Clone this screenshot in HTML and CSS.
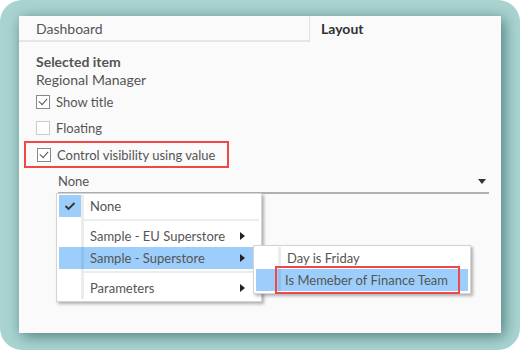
FILE: index.html
```html
<!DOCTYPE html>
<html>
<head>
    <title>Layout</title>
    <meta name="viewport" content="width=device-width, initial-scale=1.0">
    <link rel="stylesheet" href="styles.css">
</head>
<body>
    <div id="frame">
        <div id="panel">
            <div class="tabs">
                <div class="tab">Dashboard</div>
                <div class="tab active">Layout</div>
            </div>
            <div class="content">
                <div class="heading">Selected item</div>
                <div class="sub">Regional Manager</div>

                <div class="check-row">
                    <span class="box checked"></span>Show title
                </div>
                <div class="check-row">
                    <span class="box light"></span>Floating
                </div>
                <div class="check-row marked">
                    <span class="box checked"></span>Control visibility using value
                </div>

                <div class="select">
                    <span>None</span>
                    <span class="caret"></span>
                </div>

                <div class="menu main-menu">
                    <div class="item">
                        <span class="gutter on">
                            <svg width="12" height="10" viewBox="0 0 12 10"><path d="M1.5 5 L4.5 8 L10.5 2" fill="none" stroke="#333" stroke-width="1.8"/></svg>
                        </span>
                        <span class="label">None</span>
                    </div>
                    <div class="sep"><span class="gutter"></span><span class="line"></span></div>
                    <div class="item">
                        <span class="gutter"></span>
                        <span class="label">Sample - EU Superstore</span>
                        <span class="arrow"></span>
                    </div>
                    <div class="item hot">
                        <span class="gutter"></span>
                        <span class="label">Sample - Superstore</span>
                        <span class="arrow"></span>
                    </div>
                    <div class="sep"><span class="gutter"></span><span class="line"></span></div>
                    <div class="item">
                        <span class="gutter"></span>
                        <span class="label">Parameters</span>
                        <span class="arrow"></span>
                    </div>
                </div>

                <div class="menu sub-menu">
                    <div class="item">
                        <span class="gutter"></span>
                        <span class="label">Day is Friday</span>
                    </div>
                    <div class="item hot marked-item">
                        <span class="gutter"></span>
                        <span class="label">Is Memeber of Finance Team</span>
                    </div>
                </div>
            </div>
        </div>
    </div>
</body>
</html>
```

FILE: styles.css
```css
body {
    margin: 0;
    background-color: #fff;
    font-family: Lato, "Noto Sans", sans-serif;
    color: #555;
}

#frame {
    width: 520px;
    height: 350px;
    box-sizing: border-box;
    padding: 16px 19px 17px 19px;
    background-color: #a9d4d2;
    border-radius: 22px;
}

#panel {
    position: relative;
    height: 100%;
    background-color: #fafafa;
    box-shadow: 3px 3px 14px rgba(45, 95, 92, 0.75);
}

.tabs {
    display: flex;
    height: 26px;
}

.tab {
    box-sizing: border-box;
    width: 291px;
    padding: 4px 0 0 17px;
    font-size: 14px;
    border-bottom: 2px solid #e6e6e6;
    border-right: 1px solid #e2e2e2;
}

.tab.active {
    flex: 1;
    padding-left: 11px;
    font-weight: bold;
    color: #333;
    border: none;
}

.content {
    padding: 11px 0 0 17px;
    font-size: 13px;
}

.heading {
    font-weight: bold;
    font-size: 14px;
    line-height: 18px;
}

.sub {
    font-size: 14px;
    line-height: 18px;
}

.check-row {
    display: flex;
    align-items: center;
    height: 26px;
    font-size: 13px;
}

.check-row:first-of-type {
    margin-top: 4px;
}

.box {
    box-sizing: border-box;
    width: 14px;
    height: 14px;
    margin-right: 6px;
    background: #fff;
    border: 1px solid #888;
    display: flex;
    align-items: center;
    justify-content: center;
}

.box.light {
    border-color: #ccc;
}

.box.checked::after {
    content: "";
    width: 7px;
    height: 4px;
    margin-top: -3px;
    border-left: 1.5px solid #555;
    border-bottom: 1.5px solid #555;
    transform: rotate(-48deg);
}

.check-row.marked {
    width: 190px;
    margin-left: -12px;
    padding-left: 11px;
    border: 2px solid #f04848;
    height: 23px;
}

.select {
    display: flex;
    justify-content: space-between;
    align-items: center;
    margin: 2px 12px 0 22px;
    height: 22px;
    border-bottom: 2px solid #b0b0b0;
    font-size: 13px;
}

.caret {
    width: 0;
    height: 0;
    margin-right: 3px;
    border-left: 4px solid transparent;
    border-right: 4px solid transparent;
    border-top: 5px solid #333;
}

.menu {
    position: absolute;
    background: #fff;
    border: 1px solid #d4d4d4;
    box-shadow: 2px 2px 3px rgba(0, 0, 0, 0.3);
    padding: 1px 2px 2px 2px;
    font-size: 13px;
}

.main-menu {
    left: 37px;
    top: 177px;
    width: 200px;
}

.sub-menu {
    left: 234px;
    top: 229px;
    width: 212px;
}

.item {
    display: flex;
    align-items: center;
    height: 22px;
}

.gutter {
    flex: none;
    width: 22px;
    height: 100%;
    display: flex;
    align-items: center;
    justify-content: center;
    border-right: 3px solid #ececec;
}

.gutter.on {
    background: #9dcefb;
}

.label {
    flex: 1;
    padding-left: 6px;
}

.arrow {
    width: 0;
    height: 0;
    margin-right: 14px;
    border-top: 4px solid transparent;
    border-bottom: 4px solid transparent;
    border-left: 5px solid #222;
}

.sep {
    display: flex;
    height: 8px;
}

.sep .line {
    flex: 1;
    margin-top: 2px;
    height: 2px;
    background: #ececec;
}

.item.hot {
    background: #9dcefb;
}

.item.hot .gutter {
    border-right-color: #8fc0ec;
}

.marked-item .label {
    margin: -4px 8px -4px -6px;
    padding-left: 8px;
    height: 28px;
    display: flex;
    align-items: center;
    box-sizing: border-box;
    border: 2px solid #f04848;
}
```
